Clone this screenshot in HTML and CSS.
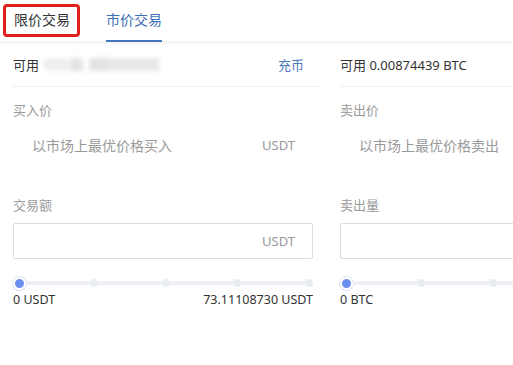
FILE: index.html
```html
<!DOCTYPE html>
<html lang="zh">
<head>
<meta charset="utf-8">
<link rel="stylesheet" href="styles.css">
</head>
<body>
<div class="tabs">
  <div class="tab">限价交易</div>
  <div class="tab active">市价交易</div>
  <div class="mark"></div>
</div>
<div class="main">
  <div class="col">
    <div class="avail">
      <div class="avail-l">可用<span class="blur"><i class="b1"></i><i class="b2"></i><i class="b3"></i><i class="b4"></i></span></div>
      <a class="link">充币</a>
    </div>
    <div class="label first">买入价</div>
    <div class="pricebox"><span class="ph">以市场上最优价格买入</span><span class="unit">USDT</span></div>
    <div class="label second">交易额</div>
    <div class="input"><span class="unit">USDT</span></div>
    <div class="slider"><span class="dot on"></span><span class="dot"></span><span class="dot"></span><span class="dot"></span><span class="dot"></span></div>
    <div class="vals"><span>0 USDT</span><span>73.11108730 USDT</span></div>
  </div>
  <div class="col">
    <div class="avail">
      <div class="avail-l">可用 0.00874439 BTC</div>
    </div>
    <div class="label first">卖出价</div>
    <div class="pricebox"><span class="ph">以市场上最优价格卖出</span></div>
    <div class="label second">卖出量</div>
    <div class="input"></div>
    <div class="slider"><span class="dot on"></span><span class="dot"></span><span class="dot"></span><span class="dot"></span><span class="dot"></span></div>
    <div class="vals"><span>0 BTC</span></div>
  </div>
</div>
</body>
</html>
```
FILE: styles.css
```css
html, body {
  margin: 0;
  padding: 0;
  overflow: hidden;
  background: #fff;
}
body {
  font-family: "Noto Sans", "Noto Sans CJK SC", sans-serif;
  color: #333;
  font-size: 13px;
  width: 513px;
  height: 365px;
}
.tabs {
  position: relative;
  height: 42px;
  display: flex;
  padding-left: 14px;
  gap: 36px;
  box-shadow: 0 1px 4px rgba(0, 0, 0, 0.07);
  border-bottom: 1px solid #f2f2f2;
  box-sizing: border-box;
}
.tab {
  font-size: 14px;
  line-height: 40px;
  color: #333;
  box-sizing: border-box;
  height: 42px;
}
.tab.active {
  color: #3d6fb6;
  border-bottom: 2px solid #4476bd;
}
.mark {
  position: absolute;
  left: 3px;
  top: 4px;
  width: 77px;
  height: 33px;
  box-sizing: border-box;
  border: 3px solid #e0201c;
  border-radius: 4px;
}
.main {
  display: flex;
  gap: 27px;
  padding: 0 13px;
  width: 513px;
  box-sizing: border-box;
  overflow: hidden;
}
.col {
  width: 300px;
  flex-shrink: 0;
}
.avail {
  height: 44px;
  display: flex;
  align-items: center;
  justify-content: space-between;
  border-bottom: 1px solid #eeeff2;
  margin-right: -7px;
  padding-right: 16px;
}
.avail-l {
  display: flex;
  align-items: center;
}
.blur {
  display: flex;
  margin-left: 4px;
  filter: blur(2px);
  height: 14px;
  align-items: center;
}
.blur i {
  display: block;
  height: 13px;
  background: #e3e3e5;
}
.b1 { width: 28px; background: #efeff0 !important; border-radius: 6px; }
.b2 { width: 12px; }
.b3 { width: 20px; margin-left: 6px; }
.b4 { width: 50px; background: #e8e8ea !important; }
.link {
  color: #4a77c0;
  text-decoration: none;
}
.label {
  height: 20px;
  line-height: 20px;
  color: #999;
}
.label.first { margin-top: 13px; }
.label.second { margin-top: 32px; }
.pricebox, .input {
  height: 36px;
  margin-top: 7px;
  display: flex;
  align-items: center;
  justify-content: space-between;
  box-sizing: border-box;
  padding: 0 18px 0 19px;
}
.ph {
  font-size: 14px;
  color: #999;
}
.unit {
  color: #999;
  margin-left: auto;
}
.input {
  margin-top: 8px;
  border: 1px solid #dcdde0;
  border-radius: 2px;
  padding-right: 17px;
}
.slider {
  margin-top: 17px;
  height: 14px;
  display: flex;
  align-items: center;
  justify-content: space-between;
  background: linear-gradient(#eef0f5, #eef0f5) center / calc(100% - 10px) 4px no-repeat;
}
.dot {
  width: 8px;
  height: 8px;
  border-radius: 50%;
  background: #e9ecf3;
}
.dot.on {
  width: 9px;
  height: 9px;
  background: #6b8ff0;
  border: 2px solid #fff;
  box-shadow: 0 0 0 1px #dfe5f5;
}
.vals {
  margin-top: 2px;
  line-height: 16px;
  display: flex;
  justify-content: space-between;
  font-size: 12.5px;
}
```
